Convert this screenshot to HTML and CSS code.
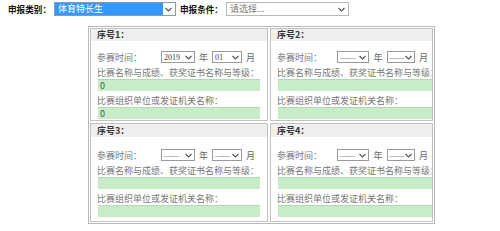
FILE: index.html
```html
<!DOCTYPE html>
<html lang="zh-CN">
<head>
    <meta charset="UTF-8">
    <meta name="viewport" content="width=device-width, initial-scale=1.0">
    <title>申报</title>
    <link rel="stylesheet" href="styles.css">
</head>
<body>

<div class="filter">
  <span class="filter-label">申报类别：</span>
  <div class="pick pick-type">
    <span class="pick-text">体育特长生</span>
    <span class="pick-arrow"><svg width="7" height="5" viewBox="0 0 7 5"><polyline points="0.5,1 3.5,4 6.5,1" fill="none" stroke="#555" stroke-width="1.2"/></svg></span>
  </div>
  <span class="filter-label">申报条件：</span>
  <div class="pick pick-cond">
    <span class="pick-text">请选择...</span>
    <span class="pick-arrow"><svg width="7" height="5" viewBox="0 0 7 5"><polyline points="0.5,1 3.5,4 6.5,1" fill="none" stroke="#555" stroke-width="1.2"/></svg></span>
  </div>
</div>

<div class="records">

  <div class="record">
    <div class="record-head">序号1：</div>
    <div class="record-body">
      <div class="when">
        <span class="when-label">参赛时间：</span>
        <div class="mini mini-year"><span class="mini-text">2019</span><svg width="7" height="5" viewBox="0 0 7 5"><polyline points="0.5,1 3.5,4 6.5,1" fill="none" stroke="#555" stroke-width="1.2"/></svg></div>
        <span class="unit">年</span>
        <div class="mini mini-month"><span class="mini-text">01</span><svg width="7" height="5" viewBox="0 0 7 5"><polyline points="0.5,1 3.5,4 6.5,1" fill="none" stroke="#555" stroke-width="1.2"/></svg></div>
        <span class="unit">月</span>
      </div>
      <div class="field-label">比赛名称与成绩、获奖证书名称与等级：</div>
      <div class="field">0</div>
      <div class="field-label">比赛组织单位或发证机关名称：</div>
      <div class="field">0</div>
    </div>
  </div>

  <div class="record">
    <div class="record-head">序号2：</div>
    <div class="record-body">
      <div class="when">
        <span class="when-label">参赛时间：</span>
        <div class="mini mini-year"><span class="mini-text dash">——</span><svg width="7" height="5" viewBox="0 0 7 5"><polyline points="0.5,1 3.5,4 6.5,1" fill="none" stroke="#555" stroke-width="1.2"/></svg></div>
        <span class="unit">年</span>
        <div class="mini mini-month"><span class="mini-text dash">——</span><svg width="7" height="5" viewBox="0 0 7 5"><polyline points="0.5,1 3.5,4 6.5,1" fill="none" stroke="#555" stroke-width="1.2"/></svg></div>
        <span class="unit">月</span>
      </div>
      <div class="field-label">比赛名称与成绩、获奖证书名称与等级：</div>
      <div class="field"></div>
      <div class="field-label">比赛组织单位或发证机关名称：</div>
      <div class="field"></div>
    </div>
  </div>

  <div class="record">
    <div class="record-head">序号3：</div>
    <div class="record-body">
      <div class="when">
        <span class="when-label">参赛时间：</span>
        <div class="mini mini-year"><span class="mini-text dash">——</span><svg width="7" height="5" viewBox="0 0 7 5"><polyline points="0.5,1 3.5,4 6.5,1" fill="none" stroke="#555" stroke-width="1.2"/></svg></div>
        <span class="unit">年</span>
        <div class="mini mini-month"><span class="mini-text dash">——</span><svg width="7" height="5" viewBox="0 0 7 5"><polyline points="0.5,1 3.5,4 6.5,1" fill="none" stroke="#555" stroke-width="1.2"/></svg></div>
        <span class="unit">月</span>
      </div>
      <div class="field-label">比赛名称与成绩、获奖证书名称与等级：</div>
      <div class="field"></div>
      <div class="field-label">比赛组织单位或发证机关名称：</div>
      <div class="field"></div>
    </div>
  </div>

  <div class="record">
    <div class="record-head">序号4：</div>
    <div class="record-body">
      <div class="when">
        <span class="when-label">参赛时间：</span>
        <div class="mini mini-year"><span class="mini-text dash">——</span><svg width="7" height="5" viewBox="0 0 7 5"><polyline points="0.5,1 3.5,4 6.5,1" fill="none" stroke="#555" stroke-width="1.2"/></svg></div>
        <span class="unit">年</span>
        <div class="mini mini-month"><span class="mini-text dash">——</span><svg width="7" height="5" viewBox="0 0 7 5"><polyline points="0.5,1 3.5,4 6.5,1" fill="none" stroke="#555" stroke-width="1.2"/></svg></div>
        <span class="unit">月</span>
      </div>
      <div class="field-label">比赛名称与成绩、获奖证书名称与等级：</div>
      <div class="field"></div>
      <div class="field-label">比赛组织单位或发证机关名称：</div>
      <div class="field"></div>
    </div>
  </div>

</div>

</body>
</html>
```

FILE: styles.css
```css
*{
  margin: 0;
  padding: 0;
  box-sizing: border-box;
}
body{
  background: #fff;
  font-family: "Noto Sans CJK SC", "Liberation Sans", sans-serif;
  font-size: 9px;
  color: #555;
}

/* top filter bar */
.filter{
  display: flex;
  align-items: center;
  padding: 2px 0 0 8px;
  height: 16px;
}
.filter-label{
  font-weight: bold;
  font-size: 8.6px;
  color: #111;
  line-height: 14px;
  margin-right: 3px;
}
.pick{
  display: flex;
  align-items: stretch;
  height: 14px;
  border: 1px solid #a5acb5;
  background: #fff;
  margin-right: 4px;
}
.pick-text{
  flex: 1;
  padding-left: 3px;
  line-height: 12px;
  color: #777;
  white-space: nowrap;
}
.pick-arrow{
  width: 12px;
  display: flex;
  align-items: center;
  justify-content: center;
  background: #fff;
}
.pick-type{
  width: 122px;
  border-color: #7e9cc0;
}
.pick-type .pick-text{
  background: #3399ff;
  color: #fff;
}
.pick-cond{
  width: 123px;
  border-color: #b8b8b8;
}

/* record table */
.records{
  display: grid;
  grid-template-columns: 178px 163px;
  gap: 2px;
  padding: 1px;
  width: 347px;
  margin: 10px 0 0 88px;
  border: 1px solid #b9b9b9;
}
.record{
  border: 1px solid #c2c2c2;
  overflow: hidden;
}
.record-head{
  height: 12px;
  line-height: 12px;
  background: #efefef;
  padding-left: 6px;
  font-weight: bold;
  color: #333;
}
.record-body{
  padding: 9px 0 1px 6px;
}
.record:nth-child(n+3) .record-body{
  padding-top: 11px;
  padding-bottom: 4px;
}
.record:nth-child(n+3) .record-head{
  height: 13px;
  line-height: 14px;
}

.when{
  display: flex;
  align-items: center;
  height: 14px;
}
.when-label{
  width: 64px;
  color: #777;
}
.mini{
  display: flex;
  align-items: center;
  height: 12px;
  border: 1px solid #9a9a9a;
  padding-right: 2px;
}
.mini-year{
  width: 34px;
}
.mini-month{
  width: 30px;
}
.mini-text{
  flex: 1;
  padding-left: 2px;
  font-family: "Liberation Serif", serif;
  font-size: 8px;
  color: #444;
}
.mini-text.dash{
  color: #888;
  letter-spacing: -1px;
}
.unit{
  margin: 0 4px;
  color: #666;
}

.field-label{
  margin-top: 3px;
  line-height: 12px;
  white-space: nowrap;
  color: #777;
}
.field-label + .field + .field-label{
  margin-top: 4px;
}
.field{
  width: 162px;
  height: 12px;
  margin-left: 1px;
  background: #c8ecc8;
  border-top: 1px solid #b4d8b4;
  line-height: 11px;
  padding-left: 2px;
  color: #336633;
}
```
